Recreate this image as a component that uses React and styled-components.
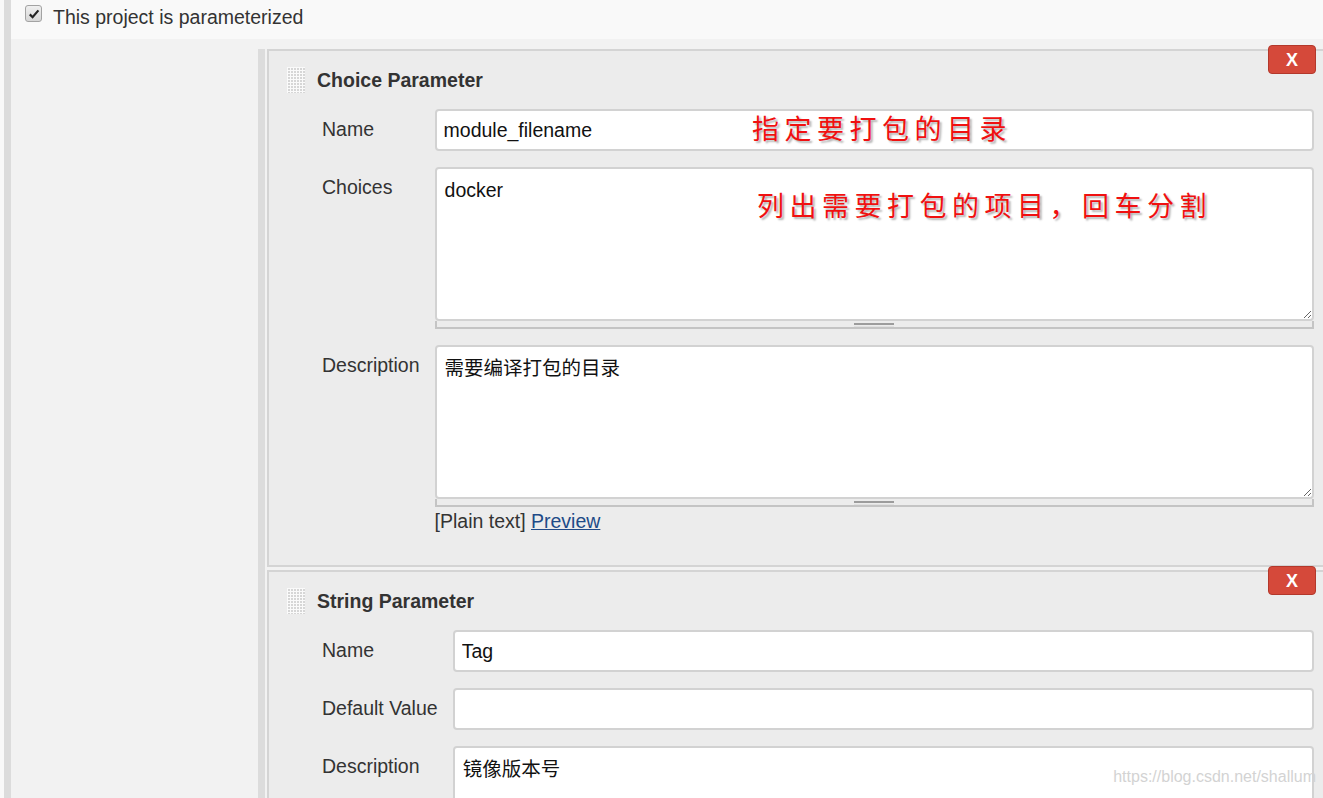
import React from 'react';
import styled, { createGlobalStyle } from 'styled-components';

const GlobalStyle = createGlobalStyle`
  html, body { margin: 0; padding: 0; }
  body {
    background: #f9f9f9;
    font-family: "Liberation Sans", Arial, "Noto Sans CJK SC", sans-serif;
    font-size: 19.5px;
    color: #333;
    overflow: hidden;
  }
`;

const Page = styled.div`
  position: relative;
  height: 798px;
  margin-left: 4px;
  border-left: 7px solid #dcdcdc;
  display: flex;
  flex-direction: column;
  overflow: hidden;
`;

const TopRow = styled.div`
  height: 39px;
  box-sizing: border-box;
  background: #f9f9f9;
  display: flex;
  align-items: flex-start;
  gap: 11px;
  padding: 5px 0 0 14px;
`;

const CheckBox = styled.span`
  width: 17px;
  height: 17px;
  box-sizing: border-box;
  border: 1px solid #a3a3a3;
  border-radius: 3px;
  background: linear-gradient(#f0f0f0, #d6d6d6);
  display: flex;
  align-items: center;
  justify-content: center;
`;

const CheckLabel = styled.span`
  margin-top: 1px;
  line-height: 22px;
  color: #333;
`;

const Content = styled.div`
  flex: 1;
  min-height: 0;
  background: #f2f2f2;
  padding: 10px 0 0 247px;
`;

const Inner = styled.div`
  border-left: 7px solid #dcdcdc;
  padding-left: 2px;
  display: flex;
  flex-direction: column;
  gap: 3px;
  height: 100%;
`;

const Panel = styled.div`
  position: relative;
  background: #ececec;
  border: 2px solid #d4d4d4;
  border-right: none;
  padding: 16px 9px 33px 18px;
`;

const DeleteButton = styled.button`
  position: absolute;
  top: -6px;
  right: 7px;
  width: 48px;
  height: 29px;
  box-sizing: border-box;
  background: #d5493a;
  border: 1px solid #b3382b;
  border-radius: 4px;
  color: #fff;
  font-family: "Liberation Sans", Arial, sans-serif;
  font-weight: bold;
  font-size: 18px;
  line-height: 1;
  padding: 0;
  display: flex;
  align-items: center;
  justify-content: center;
`;

const Header = styled.div`
  display: flex;
  align-items: center;
  gap: 12px;
  height: 26px;
  margin-bottom: 16px;
`;

const DragHandle = styled.span`
  width: 18px;
  height: 26px;
  background-color: #d6d6d6;
  background-image:
    linear-gradient(to right, #fafafa 1px, transparent 1px),
    linear-gradient(to bottom, #fafafa 1px, transparent 1px);
  background-size: 3px 3px;
`;

const Title = styled.span`
  font-weight: bold;
  color: #333;
  line-height: 22px;
`;

const Form = styled.div`
  display: grid;
  grid-template-columns: auto 1fr;
  column-gap: 15px;
  row-gap: 16px;
  padding-left: 35px;
`;

const Label = styled.div`
  padding-top: 9px;
  line-height: 22px;
  white-space: nowrap;
  color: #333;
`;

const Field = styled.div`
  display: flex;
  flex-direction: column;
  min-width: 0;
`;

const TextInput = styled.input`
  height: 42px;
  box-sizing: border-box;
  width: 100%;
  border: 2px solid #d2d2d2;
  border-radius: 4px;
  background: #fff;
  font: inherit;
  color: #111;
  padding: 0 7px;
  outline: none;
`;

const TextArea = styled.textarea`
  display: block;
  height: 154px;
  box-sizing: border-box;
  width: 100%;
  border: 2px solid #d2d2d2;
  border-radius: 4px;
  background: #fff;
  font: inherit;
  line-height: 22px;
  color: #111;
  padding: 10px 8px;
  resize: vertical;
  outline: none;
`;

const GripBar = styled.div`
  height: 8px;
  box-sizing: border-box;
  border: 2px solid #c4c4c4;
  border-top: none;
  display: flex;
  justify-content: center;
  padding-top: 2px;
`;

const Grip = styled.span`
  width: 40px;
  height: 1px;
  border-top: 2px solid #9c9c9c;
  border-bottom: 1px solid #e0e0e0;
`;

const FormatLine = styled.div`
  margin-top: 3px;
  line-height: 22px;
  color: #333;
`;

const PreviewLink = styled.a`
  color: #204a87;
  text-decoration: underline;
`;

const Annotation = styled.div`
  position: absolute;
  left: ${(p) => p.$left}px;
  top: ${(p) => p.$top}px;
  font-family: "Noto Sans CJK SC", sans-serif;
  font-size: 27px;
  letter-spacing: 5.5px;
  line-height: 30px;
  color: #f01010;
  text-shadow: 2px 2px 2px rgba(0, 0, 0, 0.3);
  white-space: nowrap;
  pointer-events: none;
`;

const Watermark = styled.div`
  position: absolute;
  right: 7px;
  bottom: 11px;
  font-size: 16px;
  line-height: 20px;
  color: #d3d3d3;
  white-space: nowrap;
`;

function GrowArea({ value }) {
  return (
    <>
      <TextArea defaultValue={value} />
      <GripBar>
        <Grip />
      </GripBar>
    </>
  );
}

function ParamPanel({ title, children, overlay }) {
  return (
    <Panel>
      <DeleteButton>X</DeleteButton>
      <Header>
        <DragHandle />
        <Title>{title}</Title>
      </Header>
      <Form>{children}</Form>
      {overlay}
    </Panel>
  );
}

export default function App() {
  return (
    <>
      <GlobalStyle />
      <Page>
        <TopRow>
          <CheckBox>
            <svg width="12" height="12" viewBox="0 0 12 12">
              <path d="M1.8 6.4 L4.6 9.2 L10.4 2.4" fill="none" stroke="#222" strokeWidth="2.2" />
            </svg>
          </CheckBox>
          <CheckLabel>This project is parameterized</CheckLabel>
        </TopRow>
        <Content>
          <Inner>
            <ParamPanel
              title="Choice Parameter"
              overlay={
                <>
                  <Annotation $left={483} $top={62}>指定要打包的目录</Annotation>
                  <Annotation $left={488} $top={139}>列出需要打包的项目，回车分割</Annotation>
                </>
              }
            >
              <Label>Name</Label>
              <Field>
                <TextInput defaultValue="module_filename" />
              </Field>
              <Label>Choices</Label>
              <Field>
                <GrowArea value="docker" />
              </Field>
              <Label>Description</Label>
              <Field>
                <GrowArea value="需要编译打包的目录" />
                <FormatLine>
                  [Plain text] <PreviewLink href="#">Preview</PreviewLink>
                </FormatLine>
              </Field>
            </ParamPanel>
            <ParamPanel title="String Parameter">
              <Label>Name</Label>
              <Field>
                <TextInput defaultValue="Tag" />
              </Field>
              <Label>Default Value</Label>
              <Field>
                <TextInput defaultValue="" />
              </Field>
              <Label>Description</Label>
              <Field>
                <TextArea defaultValue="镜像版本号" />
              </Field>
            </ParamPanel>
          </Inner>
        </Content>
        <Watermark>https://blog.csdn.net/shallum</Watermark>
      </Page>
    </>
  );
}
